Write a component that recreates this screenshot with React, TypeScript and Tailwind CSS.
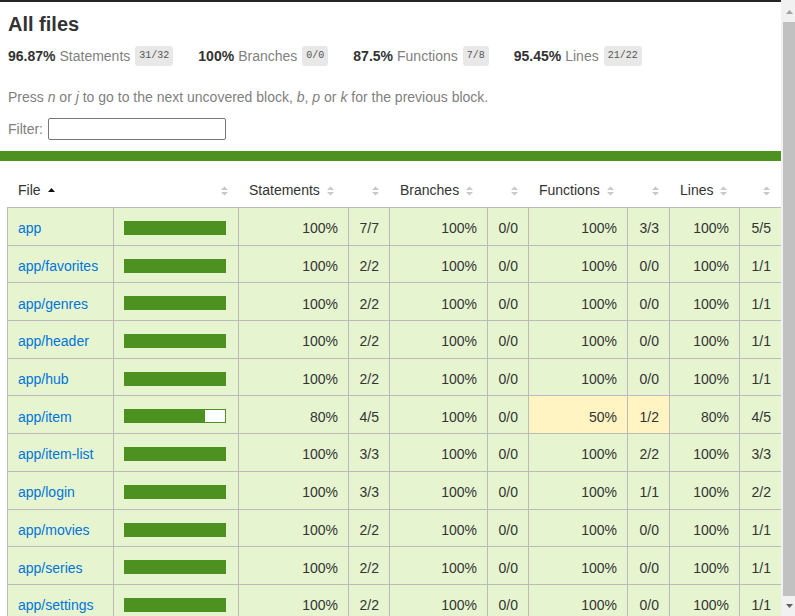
import React from 'react';

type Metric = { pct: number; abs: string };
type FileRow = {
  name: string;
  statements: Metric;
  branches: Metric;
  functions: Metric;
  lines: Metric;
};

const m = (pct: number, abs: string): Metric => ({ pct, abs });

const rows: FileRow[] = [
  { name: 'app', statements: m(100, '7/7'), branches: m(100, '0/0'), functions: m(100, '3/3'), lines: m(100, '5/5') },
  { name: 'app/favorites', statements: m(100, '2/2'), branches: m(100, '0/0'), functions: m(100, '0/0'), lines: m(100, '1/1') },
  { name: 'app/genres', statements: m(100, '2/2'), branches: m(100, '0/0'), functions: m(100, '0/0'), lines: m(100, '1/1') },
  { name: 'app/header', statements: m(100, '2/2'), branches: m(100, '0/0'), functions: m(100, '0/0'), lines: m(100, '1/1') },
  { name: 'app/hub', statements: m(100, '2/2'), branches: m(100, '0/0'), functions: m(100, '0/0'), lines: m(100, '1/1') },
  { name: 'app/item', statements: m(80, '4/5'), branches: m(100, '0/0'), functions: m(50, '1/2'), lines: m(80, '4/5') },
  { name: 'app/item-list', statements: m(100, '3/3'), branches: m(100, '0/0'), functions: m(100, '2/2'), lines: m(100, '3/3') },
  { name: 'app/login', statements: m(100, '3/3'), branches: m(100, '0/0'), functions: m(100, '1/1'), lines: m(100, '2/2') },
  { name: 'app/movies', statements: m(100, '2/2'), branches: m(100, '0/0'), functions: m(100, '0/0'), lines: m(100, '1/1') },
  { name: 'app/series', statements: m(100, '2/2'), branches: m(100, '0/0'), functions: m(100, '0/0'), lines: m(100, '1/1') },
  { name: 'app/settings', statements: m(100, '2/2'), branches: m(100, '0/0'), functions: m(100, '0/0'), lines: m(100, '1/1') },
];

const summary = [
  { pct: '96.87%', label: 'Statements', frac: '31/32' },
  { pct: '100%', label: 'Branches', frac: '0/0' },
  { pct: '87.5%', label: 'Functions', frac: '7/8' },
  { pct: '95.45%', label: 'Lines', frac: '21/22' },
];

// watermarks: >= 80 high, >= 50 medium
const level = (pct: number) =>
  pct >= 80 ? 'bg-[#e6f5d0]' : pct >= 50 ? 'bg-[#fff4c2]' : 'bg-[#fce1e5]';

const COLS = 'grid grid-cols-[107px_125px_110px_41px_98px_41px_99px_42px_70px_41px]';

function Sorter({ active }: { active?: boolean }) {
  return (
    <svg width="7" height="10" viewBox="0 0 7 10" className="mt-[2px] shrink-0">
      {active ? (
        <path d="M0 6 L3.5 2 L7 6 Z" fill="#111" />
      ) : (
        <>
          <path d="M0 4 L3.5 0.5 L7 4 Z" fill="#c8c8c8" />
          <path d="M0 6 L3.5 9.5 L7 6 Z" fill="#c8c8c8" />
        </>
      )}
    </svg>
  );
}

function HeadLabel({ label }: { label: string }) {
  return (
    <div className="flex items-center gap-[7px] pl-[10px]">
      <span>{label}</span>
      <Sorter />
    </div>
  );
}

function HeadRight() {
  return (
    <div className="flex items-center justify-end pr-[11px]">
      <Sorter />
    </div>
  );
}

function MetricCells({ metric }: { metric: Metric }) {
  const bg = level(metric.pct);
  return (
    <>
      <div className={`flex items-center justify-end border-r border-[#bbb] pr-[10px] pt-[4px] ${bg}`}>
        {metric.pct}%
      </div>
      <div className={`flex items-center justify-end border-r border-[#bbb] pr-[10px] pt-[4px] ${bg}`}>
        {metric.abs}
      </div>
    </>
  );
}

function LastCells({ metric }: { metric: Metric }) {
  const bg = level(metric.pct);
  return (
    <>
      <div className={`flex items-center justify-end border-r border-[#bbb] pr-[10px] pt-[4px] ${bg}`}>
        {metric.pct}%
      </div>
      <div className={`flex items-center justify-end pr-[10px] pt-[4px] ${bg}`}>{metric.abs}</div>
    </>
  );
}

export default function App() {
  return (
    <div className="flex h-[616px] w-[795px] overflow-hidden bg-white font-['Liberation_Sans',Arial,sans-serif] text-[14px] leading-[16px] text-[#333]">
      {/* page */}
      <div className="w-[781px] shrink-0">
        <div className="h-[2px] bg-[#252525]" />

        <div className="px-[8px] pt-[11px]">
          <h1 className="text-[20px] font-bold leading-[23px]">All files</h1>

          <div className="mt-[10px] flex h-[20px] items-center gap-[25px]">
            {summary.map((s) => (
              <div key={s.label} className="flex items-center">
                <span className="font-bold">{s.pct}</span>
                <span className="ml-[4px] text-[#7f7f7f]">{s.label}</span>
                <span className="ml-[5px] rounded-[3px] bg-[#e8e8e8] px-[4px] py-[4px] font-['Liberation_Mono',monospace] text-[10px] leading-[12px] text-[#555]">
                  {s.frac}
                </span>
              </div>
            ))}
          </div>

          <p className="mt-[23px] text-[#7f7f7f]">
            Press <em>n</em> or <em>j</em> to go to the next uncovered block, <em>b</em>, <em>p</em> or{' '}
            <em>k</em> for the previous block.
          </p>

          <div className="mt-[13px] flex h-[22px] items-center gap-[5px] text-[#7f7f7f]">
            <span>Filter:</span>
            <input
              type="search"
              className="h-[22px] w-[178px] rounded-[2px] border border-[#767676] bg-white px-[3px] text-[13px] text-[#333] outline-none"
            />
          </div>
        </div>

        <div className="mt-[11px] h-[10px] bg-[#4d9221]" />

        {/* coverage table */}
        <div className="ml-[7px] mt-[10px]">
          <div className={`${COLS} h-[37px] border-b border-[#bbb] pt-[2px]`}>
            <div className="flex items-center gap-[7px] pl-[11px]">
              <span>File</span>
              <Sorter active />
            </div>
            <HeadRight />
            <HeadLabel label="Statements" />
            <HeadRight />
            <HeadLabel label="Branches" />
            <HeadRight />
            <HeadLabel label="Functions" />
            <HeadRight />
            <HeadLabel label="Lines" />
            <HeadRight />
          </div>

          {rows.map((r) => {
            const bg = level(r.statements.pct);
            return (
              <div key={r.name} className={`${COLS} h-[37.7px] border-b border-[#bbb]`}>
                <div className={`flex items-center border-x border-[#bbb] pl-[10px] pt-[4px] ${bg}`}>
                  <a href="#" className="text-[#0074d9]">
                    {r.name}
                  </a>
                </div>
                <div className={`border-r border-[#bbb] pl-[10px] pt-[13px] ${bg}`}>
                  <div className="flex h-[14px] w-[102px] border border-[#4d9221]">
                    <div className="h-full bg-[#4d9221]" style={{ width: `${r.statements.pct}%` }} />
                    <div className="h-full flex-1 bg-white" />
                  </div>
                </div>
                <MetricCells metric={r.statements} />
                <MetricCells metric={r.branches} />
                <MetricCells metric={r.functions} />
                <LastCells metric={r.lines} />
              </div>
            );
          })}
        </div>
      </div>

      {/* scrollbar */}
      <div className="flex h-full w-[14px] shrink-0 flex-col bg-[#f1f1f1]">
        <div className="flex h-[22px] shrink-0 items-center justify-center pl-[2px] pt-[2px]">
          <svg width="7" height="4" viewBox="0 0 7 4">
            <path d="M0 4 L3.5 0 L7 4 Z" fill="#a3a3a3" />
          </svg>
        </div>
        <div className="ml-[2px] flex-1 bg-[#c1c1c1]" />
        <div className="flex h-[20px] shrink-0 items-center justify-center pl-[2px]">
          <svg width="7" height="4" viewBox="0 0 7 4">
            <path d="M0 0 L3.5 4 L7 0 Z" fill="#606060" />
          </svg>
        </div>
      </div>
    </div>
  );
}
